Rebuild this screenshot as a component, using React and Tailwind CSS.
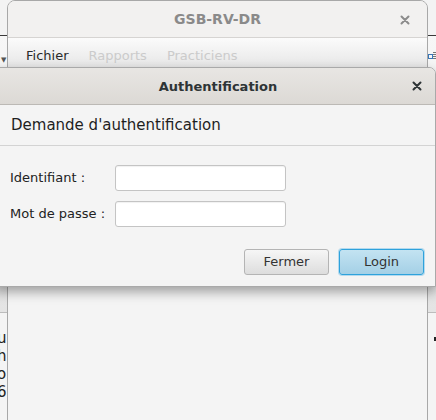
import React from "react";

const font = { fontFamily: '"DejaVu Sans", "Liberation Sans", sans-serif' };

function CloseX({ color = "#8a8a8a" }) {
  return (
    <svg width="10" height="10" viewBox="0 0 10 10">
      <path d="M1.5 1.5 L8.5 8.5 M8.5 1.5 L1.5 8.5" stroke={color} strokeWidth="2" strokeLinecap="round" />
    </svg>
  );
}

export default function App() {
  return (
    <div className="relative w-[436px] h-[420px] overflow-hidden bg-[#ececec]" style={font}>
      {/* background application fragments */}
      <div className="absolute left-0 top-0 w-[436px] h-[35px] bg-[#f3f3f3]" />
      <div className="absolute left-0 top-[35px] w-[436px] h-px bg-[#3a3a3a]" />
      <div className="absolute left-0 top-[36px] w-[436px] h-[276px] bg-gradient-to-b from-[#f7f7f7] to-[#e4e4e4]" />
      <div className="absolute left-[1px] top-[57px] text-[7px] leading-none text-[#555]">▼</div>
      <div className="absolute left-[428px] top-[54px] w-[5px] h-[5px] border border-[#3a78b8]" />
      <div className="absolute left-[433px] top-[52px] flex flex-col gap-[1px]">
        <div className="w-[4px] h-px bg-[#777]" />
        <div className="w-[4px] h-px bg-[#777]" />
        <div className="w-[4px] h-px bg-[#777]" />
        <div className="w-[4px] h-px bg-[#777]" />
      </div>
      <div className="absolute left-0 top-[312px] w-[436px] h-px bg-[#bcbcbc]" />
      <div className="absolute left-0 top-[313px] w-[436px] h-[107px] bg-[#f4f4f4]" />
      <div className="absolute left-[-3px] top-[329px] flex flex-col text-[15px] leading-[18px] text-[#222]">
        <span>u</span>
        <span>h</span>
        <span>o</span>
        <span>6</span>
      </div>
      <div className="absolute left-[434px] top-[337px] w-[2px] h-[4px] bg-[#222]" />

      {/* main window */}
      <div className="absolute left-[7px] top-0 w-[421px] h-[440px] rounded-t-[8px] border border-[#a8a8a8] bg-[#f4f4f4] flex flex-col overflow-hidden">
        <div className="h-[37px] shrink-0 flex items-center justify-center relative bg-[#f2f1f0] border-b border-[#d6d4d2]">
          <span className="text-[14px] font-bold text-[#8a8a8a]">GSB-RV-DR</span>
          <div className="absolute right-[17px] top-[14px]">
            <CloseX color="#8c8c8c" />
          </div>
        </div>
        <div className="h-[30px] shrink-0 flex items-center gap-[20px] pl-[18px] pt-[5px] bg-gradient-to-b from-[#fbfbfb] to-[#e6e6e6] text-[13px]">
          <span className="text-[#2a2a2a]">Fichier</span>
          <span className="text-[#cbcbcb]">Rapports</span>
          <span className="text-[#cbcbcb]">Practiciens</span>
        </div>
        <div className="flex-1 bg-[#f4f4f4]" />
      </div>

      {/* dialog */}
      <div className="absolute left-[-6px] top-[67px] w-[442px] h-[220px] rounded-tr-[7px] border border-[#a9a9a9] bg-[#f4f4f4] flex flex-col overflow-hidden shadow-[0_5px_12px_rgba(0,0,0,0.35)]">
        <div className="h-[37px] shrink-0 relative flex items-center justify-center bg-gradient-to-b from-[#e8e6e3] to-[#dcd9d5] border-b border-[#bcb9b5]">
          <span className="text-[13px] font-bold text-[#2e3436] pl-[6px] pt-[1px]">Authentification</span>
          <div className="absolute right-[13px] top-[13px]">
            <CloseX color="#2e3436" />
          </div>
        </div>
        <div className="h-[41px] shrink-0 flex items-center pl-[16px] border-b border-[#d3d3d3] bg-[#f4f4f4]">
          <span className="text-[15px] text-[#1e1e1e]">Demande d'authentification</span>
        </div>
        <div className="flex-1 flex flex-col pl-[15px] pt-[19px]">
          <div className="flex items-center h-[26px]">
            <span className="w-[105px] text-[13px] text-[#222]">Identifiant :</span>
            <div className="w-[171px] h-[26px] rounded-[3px] border border-[#c4c4c4] bg-white shadow-[inset_0_1px_1px_rgba(0,0,0,0.06)]" />
          </div>
          <div className="flex items-center h-[26px] mt-[10px]">
            <span className="w-[105px] text-[13px] text-[#222]">Mot de passe :</span>
            <div className="w-[171px] h-[26px] rounded-[3px] border border-[#c4c4c4] bg-white shadow-[inset_0_1px_1px_rgba(0,0,0,0.06)]" />
          </div>
          <div className="flex justify-end gap-[10px] mt-[22px] pr-[11px]">
            <div className="w-[85px] h-[26px] rounded-[3px] border border-[#b4b4b4] bg-gradient-to-b from-[#f6f6f6] to-[#dddddd] flex items-center justify-center text-[13px] text-[#333]">
              Fermer
            </div>
            <div className="w-[85px] h-[26px] rounded-[3px] border border-[#2ea2dc] bg-gradient-to-b from-[#c3e3f2] to-[#a4d0e6] flex items-center justify-center text-[13px] text-[#333] shadow-[0_0_0_1px_rgba(60,170,225,0.35)]">
              Login
            </div>
          </div>
        </div>
      </div>
    </div>
  );
}
